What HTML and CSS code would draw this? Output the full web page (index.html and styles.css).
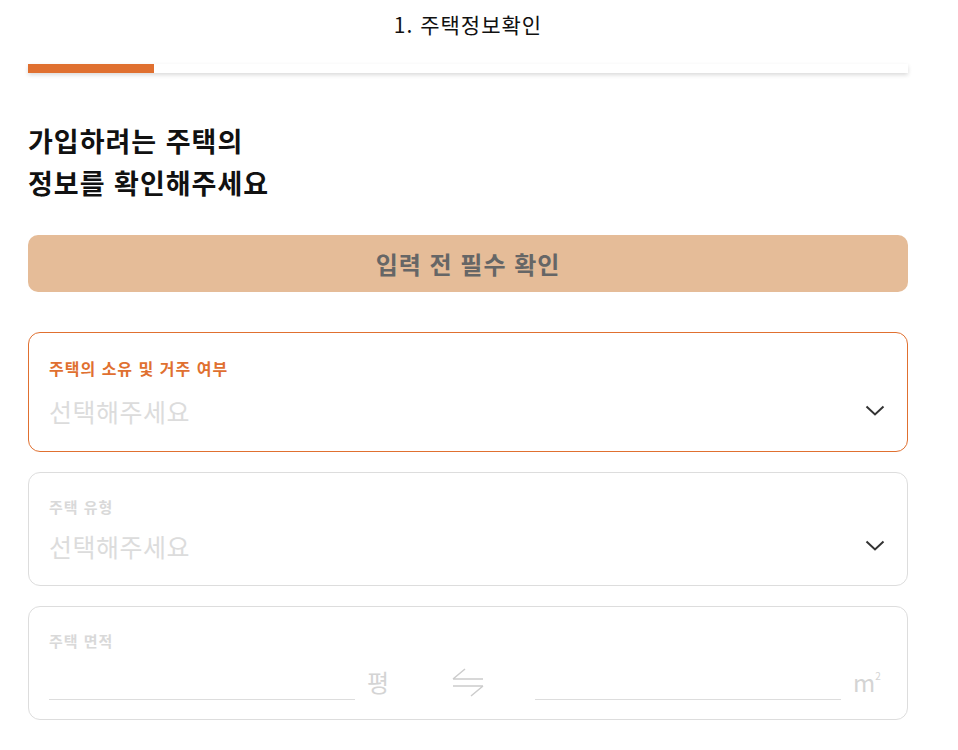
FILE: index.html
```html
<!DOCTYPE html>
<html lang="ko">
  <head>
    <meta charset="UTF-8" />
    <title>주택정보확인</title>
    <link rel="stylesheet" href="styles.css">
  </head>
  <body>
    <div class="page">
      <h2 class="step-title">1. 주택정보확인</h2>
      <div class="progress">
        <div class="progress-fill" style="width: 14.3%"></div>
      </div>

      <h1 class="heading">가입하려는 주택의<br />정보를 확인해주세요</h1>

      <button class="notice-btn">입력 전 필수 확인</button>

      <div class="form">
        <div class="field field-active">
          <div class="field-label">주택의 소유 및 거주 여부</div>
          <div class="field-row">
            <span class="placeholder">선택해주세요</span>
            <svg class="chevron" width="24" height="24" viewBox="0 0 24 24">
              <polyline points="3.5 7.5 12 15.5 20.5 7.5" fill="none" stroke="#333" stroke-width="2" />
            </svg>
          </div>
        </div>

        <div class="field">
          <div class="field-label">주택 유형</div>
          <div class="field-row">
            <span class="placeholder">선택해주세요</span>
            <svg class="chevron" width="24" height="24" viewBox="0 0 24 24">
              <polyline points="3.5 7.5 12 15.5 20.5 7.5" fill="none" stroke="#333" stroke-width="2" />
            </svg>
          </div>
        </div>

        <div class="field field-area">
          <div class="field-label">주택 면적</div>
          <div class="area-row">
            <input class="area-input" type="text" />
            <span class="unit">평</span>
            <span class="swap">
              <svg width="32" height="30" viewBox="0 0 32 30">
                <path d="M1 12 H31 M1 12 L13 2 M1 19 H31 M31 19 L19 29" fill="none" stroke="#ccc" stroke-width="1.5" />
              </svg>
            </span>
            <input class="area-input" type="text" />
            <span class="unit">m<sup>2</sup></span>
          </div>
        </div>
      </div>
    </div>
  </body>
</html>
```

FILE: styles.css
```css
body {
  margin: 0;
  background-color: #fff;
  font-family: "Noto Sans CJK KR", "Noto Sans", sans-serif;
  color: #111;
}
.page {
  padding: 0 50px 0 28px;
}
.step-title {
  margin: 0;
  padding-top: 8px;
  font-size: 21px;
  font-weight: 400;
  line-height: 32px;
  letter-spacing: 1px;
  text-align: center;
}
.progress {
  margin-top: 24px;
  height: 9px;
  background-color: #fff;
  box-shadow: 0 2px 4px rgba(0, 0, 0, 0.15);
}
.progress-fill {
  height: 100%;
  background-color: #e07030;
}
.heading {
  margin: 47px 0 0;
  font-size: 27px;
  font-weight: 700;
  line-height: 42px;
  letter-spacing: 1px;
}
.notice-btn {
  display: block;
  width: 100%;
  height: 57px;
  margin-top: 31px;
  border: none;
  border-radius: 10px;
  background-color: #e5bc98;
  color: #666;
  font-family: inherit;
  font-size: 24px;
  font-weight: 700;
  letter-spacing: 1px;
}
.form {
  display: flex;
  flex-direction: column;
  gap: 20px;
  margin-top: 40px;
}
.field {
  border: 1px solid #ddd;
  border-radius: 12px;
  padding: 23px 20px 21px;
}
.field-label {
  font-size: 15px;
  font-weight: 700;
  line-height: 22px;
  letter-spacing: 1px;
  color: #d9d9d9;
}
.field-row {
  display: flex;
  align-items: center;
  justify-content: space-between;
  height: 36px;
  margin-top: 10px;
}
.placeholder {
  font-size: 25px;
  letter-spacing: 0.5px;
  color: #dcdcdc;
}
.chevron {
  display: block;
}
.field-active {
  border-color: #e07030;
  padding-bottom: 22px;
}
.field-active .field-label {
  font-size: 16px;
  line-height: 24px;
  color: #e07030;
}
.field-active .field-row {
  margin-top: 13px;
}
.field-area {
  padding-bottom: 19px;
}
.area-row {
  display: flex;
  align-items: center;
  margin-top: 11px;
}
.area-input {
  flex: 1;
  min-width: 0;
  height: 36px;
  padding: 0;
  border: none;
  border-bottom: 1px solid #ddd;
  outline: none;
  font-family: inherit;
  font-size: 20px;
}
.unit {
  width: 46px;
  box-sizing: border-box;
  padding-left: 12px;
  font-size: 24px;
  color: #d4d4d4;
}
.unit sup {
  font-size: 10px;
  vertical-align: 12px;
}
.swap {
  display: flex;
  justify-content: center;
  width: 134px;
}
.swap svg {
  display: block;
}
```
